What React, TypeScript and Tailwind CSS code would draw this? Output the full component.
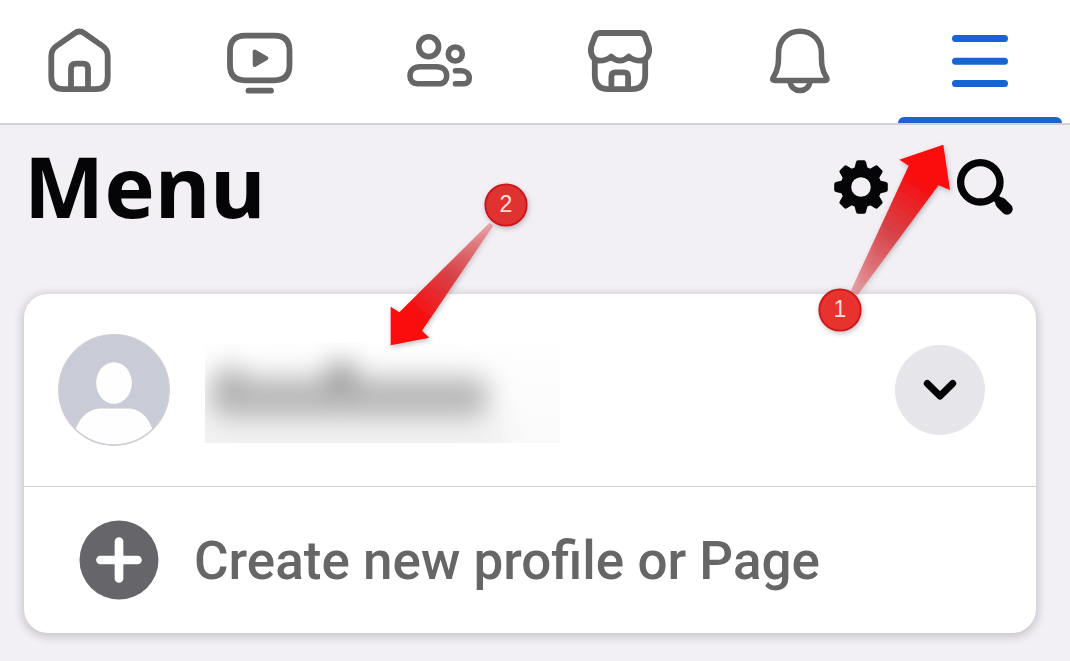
import React from "react";

const iconClass = "h-[72px] w-[72px] fill-none stroke-[#666666]";

function HomeIcon() {
  return (
    <svg viewBox="0 0 72 72" className={iconClass} strokeWidth="5.8" strokeLinejoin="round" aria-hidden="true">
      <path d="M30.5 7.3Q35.5 3.8 40.5 7.3L58.5 20Q63.7 23.7 63.7 30V51Q63.7 63.2 51.5 63.2H19.5Q7.3 63.2 7.3 51V30Q7.3 23.7 12.5 20Z" />
      <path d="M27 63V42.5Q27 37.6 32 37.6H39Q44 37.6 44 42.5V63" />
    </svg>
  );
}

function VideoIcon() {
  return (
    <svg viewBox="0 0 72 72" className={iconClass} strokeWidth="5.8" strokeLinecap="round" aria-hidden="true">
      <path d="M21 9.7H50.5Q65.5 9.7 65.5 24.7V39.3Q65.5 54.3 50.5 54.3H21Q6 54.3 6 39.3V24.7Q6 9.7 21 9.7Z" />
      <path d="M30.7 25.5V39L42.3 32.2Z" className="fill-[#666666]" strokeWidth="4" strokeLinejoin="round" />
      <path d="M24.5 64.7H47" />
    </svg>
  );
}

function FriendsIcon() {
  return (
    <svg viewBox="0 0 72 72" className={iconClass} strokeWidth="5.6" strokeLinecap="round" aria-hidden="true">
      <circle cx="24.7" cy="20.7" r="9.9" />
      <circle cx="51.3" cy="28" r="7" />
      <path d="M16 40.7H32.5C39 40.7 42.7 44.5 42.7 49.8C42.7 54.5 39.8 57.7 35.5 57.7H13.5C9 57.7 6 54.5 6 49.8C6 44.5 9.8 40.7 16 40.7Z" />
      <path d="M51.5 44.7H57C62 44.7 65.3 47.7 65.3 52.2C65.3 55.5 63 57.7 60 57.7H51.5" />
    </svg>
  );
}

function StoreIcon() {
  return (
    <svg viewBox="0 0 72 72" className={iconClass} strokeWidth="5.8" strokeLinejoin="round" aria-hidden="true">
      <path d="M16 7H56C59 7 60.5 8.4 61.3 11L64.6 20C66.5 27.5 63 34.7 56.5 34.7C51.5 34.7 48 33.5 44.8 30.5C41.8 33.5 39.5 34.7 36 34.7S30 33.5 27.2 30.5C24 33.5 20.5 34.7 15.5 34.7C9 34.7 5.5 27.5 7.4 20L10.7 11C11.5 8.4 13 7 16 7Z" />
      <path d="M10.8 33V49C10.8 58.5 15.5 63.2 24.5 63.2H47.5C56.5 63.2 61.2 58.5 61.2 49V33" />
      <path d="M27.4 63V50.5Q27.4 46.4 31.5 46.4H40Q44.1 46.4 44.1 50.5V63" />
    </svg>
  );
}

function BellIcon() {
  return (
    <svg viewBox="0 0 72 72" className={iconClass} strokeWidth="5.5" strokeLinejoin="round" aria-hidden="true">
      <path d="M36 5.2C23.5 5.2 14.6 14.5 14.6 26.5C14.6 37 14.4 43.5 9.3 51.3C7.9 53.3 8.5 54.4 10.5 54.4H61.2C63.2 54.4 63.8 53.3 62.4 51.3C57.4 43.5 57.4 37 57.4 26.5C57.4 14.5 48.5 5.2 36 5.2Z" />
      <path d="M25.8 55.5C27 61.5 31 64.5 36 64.5S45 61.5 46.2 55.5" />
    </svg>
  );
}

function MenuIcon() {
  return (
    <svg viewBox="0 0 72 72" className="h-[72px] w-[72px] stroke-[#1764d8]" strokeWidth="7" strokeLinecap="round" aria-hidden="true">
      <path d="M11.5 12.5H60.5M11.5 35.2H60.5M11.5 57.5H60.5" />
    </svg>
  );
}

const tabs = [
  { label: "Home", Icon: HomeIcon },
  { label: "Video", Icon: VideoIcon },
  { label: "Friends", Icon: FriendsIcon },
  { label: "Marketplace", Icon: StoreIcon },
  { label: "Notifications", Icon: BellIcon },
  { label: "Menu", Icon: MenuIcon },
];

function GearIcon() {
  return (
    <svg viewBox="-30 -30 60 60" className="h-[60px] w-[60px] fill-[#050507]" aria-hidden="true">
      <path
        fillRule="evenodd"
        d="M0-20.5A20.5 20.5 0 1 1 0 20.5A20.5 20.5 0 1 1 0-20.5ZM0-9.8A9.8 9.8 0 1 0 0 9.8A9.8 9.8 0 1 0 0-9.8Z"
      />
      {[0, 45, 90, 135, 180, 225, 270, 315].map((angle) => (
        <path key={angle} transform={`rotate(${angle})`} d="M-7-17L-5-25Q-4.6-26.8-3-26.8H3Q4.6-26.8 5-25L7-17Z" />
      ))}
    </svg>
  );
}

function SearchIcon() {
  return (
    <svg viewBox="0 0 60 60" className="h-[60px] w-[60px] fill-none stroke-[#050507]" aria-hidden="true">
      <circle cx="25.3" cy="25.3" r="19.7" strokeWidth="7.3" />
      <path d="M39.5 39.5L44 44" strokeWidth="7.5" />
      <path d="M46 46L52 52" strokeWidth="11.5" strokeLinecap="round" />
    </svg>
  );
}

function Avatar() {
  return (
    <svg viewBox="0 0 112 112" className="h-28 w-28 shrink-0" role="img" aria-label="Profile picture">
      <defs>
        <clipPath id="avatar-clip">
          <circle cx="56" cy="56" r="54.5" />
        </clipPath>
      </defs>
      <circle cx="56" cy="56" r="55.5" fill="#c9ccd6" />
      <g clipPath="url(#avatar-clip)" fill="#fefefe">
        <ellipse cx="56" cy="49" rx="17.8" ry="20.8" />
        <path d="M17 97C22 81 33 74.5 43 74.5H70C80 74.5 90 81 95 97L88 112H24Z" />
      </g>
      <circle cx="56" cy="56" r="55.2" fill="none" stroke="#cfcfd4" strokeWidth="1.4" />
    </svg>
  );
}

function HiddenName() {
  return (
    <svg viewBox="0 0 355 100" className="h-[100px] w-[355px] overflow-hidden" role="img" aria-label="Hidden profile name">
      <defs>
        <filter id="name-blur" filterUnits="userSpaceOnUse" x="-60" y="-60" width="475" height="220" colorInterpolationFilters="sRGB">
          <feGaussianBlur stdDeviation="13" />
        </filter>
        <linearGradient id="name-base" x1="0" y1="0" x2="0" y2="1">
          <stop offset="0" stopColor="#fefefe" />
          <stop offset="1" stopColor="#fafafa" />
        </linearGradient>
      </defs>
      <rect width="355" height="100" fill="url(#name-base)" />
      <g filter="url(#name-blur)">
        <rect x="4" y="34" width="280" height="40" rx="16" fill="#b8b8b8" />
        <rect x="-30" y="74" width="330" height="50" fill="#f1f1f1" />
        <circle cx="25" cy="38" r="14" fill="#acacac" />
        <circle cx="136" cy="34" r="16" fill="#9c9c9c" />
      </g>
    </svg>
  );
}

function Callouts() {
  return (
    <>
      <svg viewBox="810 136 150 204" className="pointer-events-none absolute top-[136px] right-[110px] h-[204px] w-[150px]" aria-label="Step 1">
        <defs>
          <linearGradient id="arrow-one" gradientUnits="userSpaceOnUse" x1="852" y1="297" x2="932" y2="165">
            <stop offset="0" stopColor="#dc3a40" stopOpacity=".35" />
            <stop offset=".5" stopColor="#d8363b" stopOpacity=".92" />
            <stop offset=".9" stopColor="#fb080b" />
          </linearGradient>
          <filter id="callout-shadow" x="-30%" y="-30%" width="160%" height="160%">
            <feDropShadow dx="1" dy="2" stdDeviation="2.5" floodColor="#000" floodOpacity=".25" />
          </filter>
        </defs>
        <path filter="url(#callout-shadow)" d="M943.3 144.7L899.3 159.7L908.7 165.7L850.7 291L857.3 295.5L938.5 185.3L950 190Z" fill="url(#arrow-one)" />
        <circle cx="840" cy="310" r="20.7" fill="#e8302f" stroke="#cb151d" strokeWidth="1.8" filter="url(#callout-shadow)" />
        <text x="840" y="317" textAnchor="middle" className="fill-[#fde0dc] font-['Liberation_Sans',sans-serif] text-[23px]">1</text>
      </svg>
      <svg viewBox="380 175 160 180" className="pointer-events-none absolute top-[175px] left-[380px] h-[180px] w-[160px]" aria-label="Step 2">
        <defs>
          <linearGradient id="arrow-two" gradientUnits="userSpaceOnUse" x1="493" y1="222" x2="404" y2="327">
            <stop offset="0" stopColor="#dc3a40" stopOpacity=".35" />
            <stop offset=".5" stopColor="#d8363b" stopOpacity=".92" />
            <stop offset=".9" stopColor="#fb080b" />
          </linearGradient>
        </defs>
        <path filter="url(#callout-shadow)" d="M390.7 345.3V306.7L399.3 312.3L489.3 223L493.5 225.5L422 330.7L429.3 337.7Z" fill="url(#arrow-two)" />
        <circle cx="506" cy="205" r="20.7" fill="#e0302f" stroke="#c7141c" strokeWidth="1.8" filter="url(#callout-shadow)" />
        <text x="506" y="212" textAnchor="middle" className="fill-[#fde0dc] font-['Liberation_Sans',sans-serif] text-[23px]">2</text>
      </svg>
    </>
  );
}

export default function App() {
  return (
    <div className="relative min-h-screen overflow-hidden bg-[#f2f0f5] font-[Roboto,sans-serif]">
      <nav className="border-b-2 border-[#d2d2d4] bg-white" aria-label="Main">
        <div className="-ml-2.5 grid grid-cols-6">
          {tabs.map(({ label, Icon }) => (
            <button key={label} type="button" aria-label={label} className="flex flex-col items-center px-2 pt-[26px]">
              <Icon />
              <span className={label === "Menu" ? "mt-[19px] h-1.5 w-full rounded-t-md bg-[#1b65cc]" : "mt-[19px] h-1.5 w-full"} />
            </button>
          ))}
        </div>
      </nav>

      <main className="pr-[34px] pl-6">
        <header className="flex h-[169px] items-start justify-between pr-[21px]">
          <h1 className="pt-2.5 font-['Noto_Sans',sans-serif] text-[85px] leading-[100px] font-bold text-[#050507]">Menu</h1>
          <div className="flex gap-16 pt-8">
            <button type="button" aria-label="Settings"><GearIcon /></button>
            <button type="button" aria-label="Search"><SearchIcon /></button>
          </div>
        </header>

        <section className="rounded-3xl bg-white shadow-[0_2px_10px_2px_rgba(0,0,0,0.18)]">
          <div className="flex h-[193px] items-center border-b border-[#cfcfd0] pr-[51px] pl-[34px]">
            <Avatar />
            <div className="ml-[35px] flex-1 pt-1.5">
              <HiddenName />
            </div>
            <button type="button" aria-label="Show profiles" className="flex h-[90px] w-[90px] items-center justify-center rounded-full bg-[#e5e5ea]">
              <svg viewBox="0 0 40 40" className="h-10 w-10 fill-none stroke-[#050507]" strokeWidth="7" strokeLinecap="round" strokeLinejoin="round" aria-hidden="true">
                <path d="M7.3 13.5L20 26L32.7 13.5" />
              </svg>
            </button>
          </div>
          <button type="button" className="flex h-[146px] w-full items-center gap-[35px] pl-[55px] text-[53px] leading-[64px] font-medium text-[#666666]">
            <svg viewBox="0 0 80 80" className="h-20 w-20 shrink-0" aria-hidden="true">
              <circle cx="40" cy="40" r="39.5" fill="#66666a" />
              <path d="M21.5 40H58.5M40 21.5V58.5" fill="none" stroke="#fff" strokeWidth="8.7" strokeLinecap="round" />
            </svg>
            <span className="pt-0.5">Create new profile or Page</span>
          </button>
        </section>
      </main>
      <Callouts />
    </div>
  );
}
